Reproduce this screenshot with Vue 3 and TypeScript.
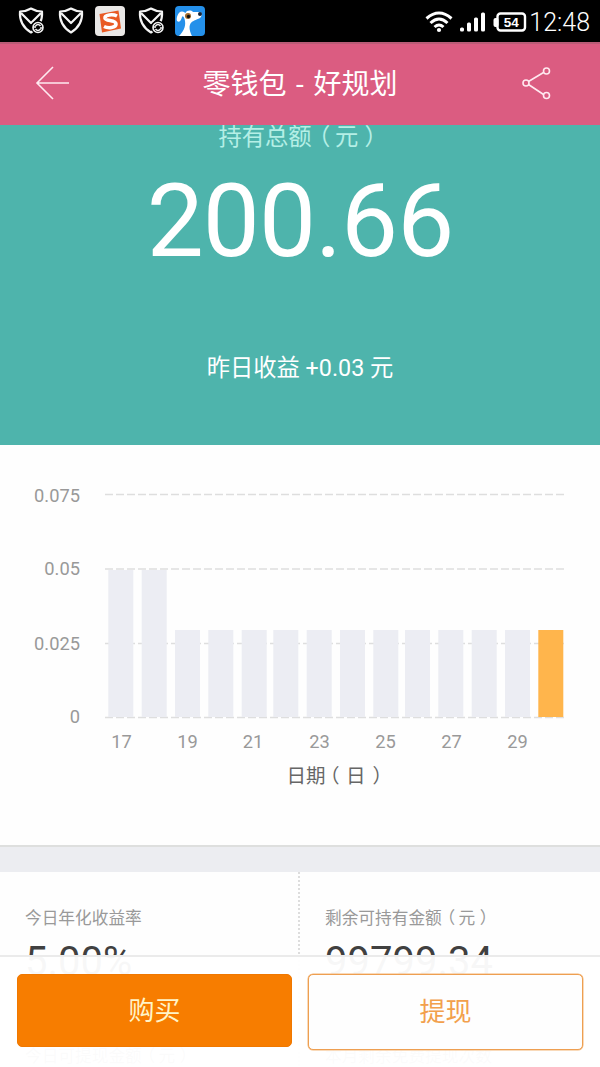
<script setup lang="ts">
interface Bar { x: number; top: number; current?: boolean }

const bars: Bar[] = [
  { x: 108.3, top: 125 }, { x: 141.7, top: 125 }, { x: 175, top: 185 }, { x: 208.3, top: 185 },
  { x: 241.7, top: 185 }, { x: 273.3, top: 185 }, { x: 306.7, top: 185 }, { x: 340, top: 185 },
  { x: 373.3, top: 185 }, { x: 405, top: 185 }, { x: 438.3, top: 185 }, { x: 471.7, top: 185 },
  { x: 505, top: 185 }, { x: 538.3, top: 185, current: true },
]
const baseline = 272
const ticks = [
  { label: '0.075', line: 49.5, text: 56.5 },
  { label: '0.05', line: 124, text: 130 },
  { label: '0.025', line: 198.5, text: 204.5 },
  { label: '0', line: 272.5, text: 278 },
]
const days = [
  { label: '17', x: 121.5 }, { label: '19', x: 187.5 }, { label: '21', x: 253 }, { label: '23', x: 319.5 },
  { label: '25', x: 385.5 }, { label: '27', x: 451.5 }, { label: '29', x: 517.5 },
]
const stats = [
  { label: '今日年化收益率', unit: '', value: '5.00%', next: '今日可提现金额', nextUnit: '元' },
  { label: '剩余可持有金额', unit: '元', value: '99799.34', next: '本月剩余免费提现次数', nextUnit: '' },
]
</script>

<template>
  <div class="screen">
    <div class="status">
      <div class="notices">
        <svg v-for="n in 2" :key="n" class="shield" viewBox="0 0 28 30">
          <path d="M3 5.500Q9 5.500 14 2.500Q19 5.500 25 5.500Q26 19 14 26.500Q2 19 3 5.500Z" />
          <path d="M4 7L14 17L24 7" />
          <template v-if="n === 1">
            <circle cx="21" cy="21.500" r="7" class="knock" />
            <circle cx="21" cy="21.500" r="5" class="thin" />
            <path d="M16 21h3M23 22h3M18.500 20q2.500-3 5 0M18.500 23q2.500 3 5 0" class="thin" />
          </template>
        </svg>
        <svg class="app" viewBox="0 0 30 30">
          <rect width="30" height="30" rx="4" fill="#e9e7e6" />
          <path d="M4.500 8L23.500 4.500L26 22.500L7 26.500Z" fill="#e95a24" />
          <path d="M22 10C18 8 9.500 8.500 10 12.300C10.500 15.500 21 13.500 21 18C21 22 13 22.500 9 20.500" fill="none" stroke="#fff" stroke-width="3.600" />
        </svg>
        <svg class="shield" viewBox="0 0 28 30">
          <path d="M3 5.500Q9 5.500 14 2.500Q19 5.500 25 5.500Q26 19 14 26.500Q2 19 3 5.500Z" />
          <path d="M4 7L14 17L24 7" />
          <circle cx="21" cy="21.500" r="7" class="knock" />
          <circle cx="21" cy="21.500" r="5" class="thin" />
          <path d="M16 21h3M23 22h3M18.500 20q2.500-3 5 0M18.500 23q2.500 3 5 0" class="thin" />
        </svg>
        <svg class="app dog" viewBox="0 0 30 30">
          <rect width="30" height="30" rx="4" fill="#2490ea" />
          <path d="M2 15C1 12 3 5.500 7 5.500C9 5.500 10 7 10.500 7C12 4 16 4 18 6L25 6C28 7 27 10 25 12C21 14 17 15 15.500 17.500C13.500 21 15 26 17 30H4C8 26 11 21 10 15C9.500 12 8 9 7 11C6 14 5 17 2 15Z" fill="#fff" />
          <circle cx="13" cy="10" r="3" fill="#a06b2c" />
          <circle cx="13.500" cy="10.500" r="1.700" fill="#111" />
          <circle cx="25" cy="8" r="2" fill="#132338" />
        </svg>
      </div>
      <div class="system">
        <svg class="signals" viewBox="0 0 118 30">
          <g fill="none" stroke="#fff" stroke-width="3">
            <path d="M1.500 12.500Q14 1.500 26.500 12.500M5.500 17Q14 9 22.500 17M9.500 21Q14 17 18.500 21" />
          </g>
          <circle cx="14" cy="24" r="2.100" fill="#fff" />
          <g fill="#fff">
            <rect x="35" y="21.500" width="4" height="4" rx="1.500" />
            <rect x="42" y="16.500" width="4" height="9" rx="1.500" />
            <rect x="49" y="11.500" width="4" height="14" rx="1.500" />
            <rect x="56" y="6.500" width="4" height="19" rx="1.500" />
            <rect x="68.500" y="12" width="5" height="9" rx="2" />
          </g>
          <rect x="72.500" y="7.500" width="27.500" height="17" rx="3" fill="none" stroke="#fff" stroke-width="2.400" />
          <text x="86.300" y="20.800" class="charge">54</text>
        </svg>
        <span class="clock">12:48</span>
      </div>
    </div>

    <header class="bar">
      <svg class="back" viewBox="0 0 36 36"><path d="M34 18H2M18 2L2 18L18 34" /></svg>
      <h1>零钱包 - 好规划</h1>
      <svg class="share" viewBox="0 0 30 34">
        <path d="M6.500 15.500L21.500 6.500M6.500 18.500L21.500 28.500" />
        <circle cx="4" cy="17" r="3" /><circle cx="24.500" cy="5" r="3" /><circle cx="24.500" cy="29.500" r="3" />
      </svg>
    </header>

    <section class="hero">
      <div class="caption">持有总额<span class="open">（</span>元<span class="close">）</span></div>
      <div class="total">200.66</div>
      <div class="gain">昨日收益 +0.03 元</div>
    </section>

    <section class="chart">
      <svg viewBox="0 0 600 400" width="600" height="400">
        <line v-for="t in ticks" :key="t.label" x1="105" x2="564" :y1="t.line" :y2="t.line" class="grid" />
        <rect v-for="b in bars" :key="b.x" :x="b.x" :y="b.top" width="25" :height="baseline - b.top" :class="b.current ? 'today' : 'past'" />
        <text v-for="t in ticks" :key="t.label" x="80" :y="t.text" class="tick end">{{ t.label }}</text>
        <text v-for="d in days" :key="d.label" :x="d.x" y="303" class="tick mid">{{ d.label }}</text>
        <text y="337.500" class="axis"><tspan x="286.500">日期</tspan><tspan x="320">（</tspan><tspan x="346">日</tspan><tspan x="372.500">）</tspan></text>
      </svg>
    </section>

    <section class="stats">
      <div v-for="s in stats" :key="s.label" class="stat">
        <div class="label">{{ s.label }}<template v-if="s.unit"><span class="open">（</span>{{ s.unit }}<span class="close">）</span></template></div>
        <div class="value">{{ s.value }}</div>
        <div class="label next">{{ s.next }}<template v-if="s.nextUnit"><span class="open">（</span>{{ s.nextUnit }}<span class="close">）</span></template></div>
      </div>
    </section>

    <footer class="actions">
      <button class="buy">购买</button>
      <button class="withdraw">提现</button>
    </footer>
  </div>
</template>

<style scoped>
.screen {
  position: relative;
  width: 600px;
  height: 1067px;
  overflow: hidden;
  display: flex;
  flex-direction: column;
  background: #fefefe;
  font-family: Roboto, "Noto Sans CJK SC", sans-serif;
}
.status {
  height: 42px;
  flex: none;
  box-sizing: border-box;
  display: flex;
  justify-content: space-between;
  background: #000;
  padding: 6px 10px 0 17px;
}
.notices { display: flex; gap: 11.5px; }
.shield { width: 28px; height: 30px; fill: none; stroke: #f4f4f4; stroke-width: 2.2; stroke-linejoin: round; }
.shield .knock { fill: #000; stroke: none; }
.shield .thin { stroke-width: 1.6; }
.app { width: 30px; height: 30px; }
.shield + .app { margin-left: -1px; }
.dog { margin-left: -2px; }
.system { display: flex; }
.signals { width: 118px; height: 30px; margin: 0 -14px 0 0; }
.charge { font: bold 13.5px "Liberation Sans", sans-serif; fill: #fff; text-anchor: middle; }
.clock { font-size: 25px; font-weight: 300; line-height: 33px; color: #fff; }
.bar {
  height: 83px;
  flex: none;
  box-sizing: border-box;
  display: flex;
  justify-content: space-between;
  align-items: center;
  padding: 0 48px 3px 35px;
  border-top: 2px solid #b95b76;
  background: #db5c81;
}
.back { width: 36px; height: 36px; fill: none; stroke: #ffe9f0; stroke-width: 1.6; }
.share { width: 30px; height: 34px; fill: none; stroke: #ffe9f0; stroke-width: 1.6; }
h1 {
  margin: 3px 0 0 7px;
  font-size: 28px;
  font-weight: 400;
  color: #fff;
  white-space: pre;
  line-height: 40px;
  word-spacing: 2.6px;
}
.hero {
  height: 320px;
  flex: none;
  box-sizing: border-box;
  overflow: hidden;
  display: flex;
  flex-direction: column;
  align-items: center;
  background: #4eb4ac;
  color: #fff;
}
.open { margin-left: -0.2em; margin-right: 0.2em; }
.close { margin-left: 0.27em; margin-right: -0.27em; }
.caption { font-size: 23.3px; line-height: 32px; height: 32px; margin-top: -4px; color: #b5efe6; white-space: nowrap; }
.total { font-size: 101.5px; line-height: 120px; margin-top: 9px; letter-spacing: -0.9px; }
.gain { font-size: 23.3px; line-height: 34px; margin-top: 69px; }
.chart { height: 400px; flex: none; border-bottom: 2px solid #dedfde; }
.chart svg { display: block; }
.grid { stroke: #dedede; stroke-width: 1.3; stroke-dasharray: 8 3; }
.past { fill: #ecedf3; }
.today { fill: #ffb54c; }
.tick { font-size: 18.3px; fill: #999; }
.end { text-anchor: end; }
.mid { text-anchor: middle; }
.axis { font-size: 19.5px; fill: #666; }
.stats { flex: none; display: grid; grid-template-columns: 300px 300px; border-top: 25px solid #ecedf1; }
.stat { height: 210px; box-sizing: border-box; padding: 35px 0 0 25px; }
.stat:first-child { border-right: 2px dotted #ddd; }
.label { font-size: 16.7px; line-height: 24px; color: #999; white-space: nowrap; }
.value { font-size: 40px; line-height: 48px; margin-top: 7px; color: #404040; }
.next { margin-top: 59px; }
.actions {
  position: absolute;
  left: 0;
  right: 0;
  bottom: 0;
  height: 112px;
  box-sizing: border-box;
  display: flex;
  align-items: flex-start;
  gap: 16px;
  padding: 17px 17px 0;
  border-top: 2px solid #ebebeb;
  background: rgba(255, 255, 255, 0.96);
}
button { flex: 1; box-sizing: border-box; margin: 0; padding: 0 0 5px; border-radius: 5px; font: 400 26px "Noto Sans CJK SC", sans-serif; }
.buy { height: 73px; border: 1px solid #f07800; background: #f77d00; color: #fff4c8; }
.withdraw { height: 76px; border: 1.6px solid #ee9f51; background: #fefefe; color: #f2a04c; box-shadow: 0 0 0 0.5px #f4b677; }
</style>
